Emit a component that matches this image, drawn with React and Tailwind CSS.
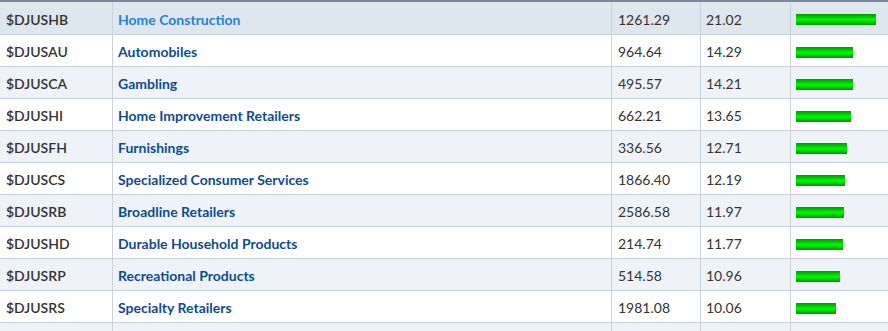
import React from 'react';

const rows = [
  { symbol: '$DJUSHB', name: 'Home Construction', close: '1261.29', pct: '21.02' },
  { symbol: '$DJUSAU', name: 'Automobiles', close: '964.64', pct: '14.29' },
  { symbol: '$DJUSCA', name: 'Gambling', close: '495.57', pct: '14.21' },
  { symbol: '$DJUSHI', name: 'Home Improvement Retailers', close: '662.21', pct: '13.65' },
  { symbol: '$DJUSFH', name: 'Furnishings', close: '336.56', pct: '12.71' },
  { symbol: '$DJUSCS', name: 'Specialized Consumer Services', close: '1866.40', pct: '12.19' },
  { symbol: '$DJUSRB', name: 'Broadline Retailers', close: '2586.58', pct: '11.97' },
  { symbol: '$DJUSHD', name: 'Durable Household Products', close: '214.74', pct: '11.77' },
  { symbol: '$DJUSRP', name: 'Recreational Products', close: '514.58', pct: '10.96' },
  { symbol: '$DJUSRS', name: 'Specialty Retailers', close: '1981.08', pct: '10.06' },
  { symbol: '', name: '', close: '', pct: '' }
];

const Bar = ({ pct }) => {
  if (!pct) return null;
  // bar scale is ~4px per percent, capped at 80
  const width = Math.min(80, Math.round(parseFloat(pct) * 4));
  return (
    <div
      className="h-[11px] bg-gradient-to-b from-[#009a00] via-[#00f500] to-[#009a00]"
      style={{ width }}
    />
  );
};

export default function App() {
  return (
    <div
      className="w-[888px] h-[331px] overflow-hidden bg-white text-[14px] text-[#333]"
      style={{ fontFamily: 'Lato, "Open Sans", sans-serif' }}>
      <div className="border-t-2 border-[#7a8898]">
        {rows.map((row, i) => {
          const hovered = i === 0;
          const bg = hovered ? 'bg-[#dee6ee]' : i % 2 === 0 ? 'bg-[#eff3f7]' : 'bg-white';
          return (
            <div
              key={i}
              className={`flex ${hovered ? 'h-[33px]' : 'h-[32px]'} border-b border-[#c7d4df] ${bg}`}>
              <div className="flex w-[112px] items-center pt-[2px] pl-[6px] font-semibold">
                {row.symbol}
              </div>
              <div className="flex w-[499px] items-center border-l border-[#c7d4df] pt-[2px] pl-[5px]">
                <span className={`font-bold ${hovered ? 'text-[#2a80d5]' : 'text-[#0e4c8d]'}`}>
                  {row.name}
                </span>
              </div>
              <div className="flex w-[89px] items-center border-l border-[#c7d4df] pt-[2px] pl-[6px]">
                {row.close}
              </div>
              <div className="flex w-[90px] items-center border-l border-[#c7d4df] pt-[2px] pl-[5px]">
                {row.pct}
              </div>
              <div className="flex flex-1 items-center border-l border-[#c7d4df] pt-[3px] pl-[5px]">
                <Bar pct={row.pct} />
              </div>
            </div>
          );
        })}
      </div>
    </div>
  );
}
